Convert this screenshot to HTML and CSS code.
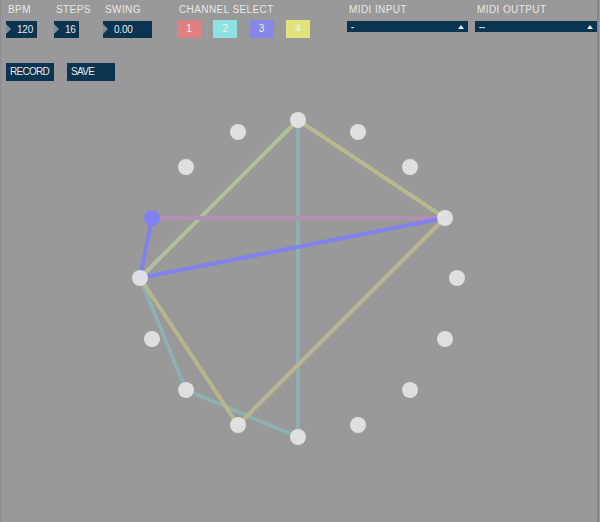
FILE: index.html
```html
<!DOCTYPE html>
<html>
<head>
<meta charset="utf-8">
<link rel="stylesheet" href="styles.css">
</head>
<body>
<div class="app">
  <svg class="canvas" width="600" height="522" viewBox="0 0 600 522">
    <g class="lines" stroke-width="4" stroke-linecap="round" fill="none">
      <line class="l-teal" x1="298" y1="120" x2="298" y2="437"/>
      <line class="l-teal" x1="298" y1="437" x2="186" y2="390"/>
      <line class="l-teal" x1="186" y1="390" x2="140" y2="278"/>
      <line class="l-khaki" x1="298" y1="120" x2="445" y2="218"/>
      <line class="l-khaki" x1="445" y1="218" x2="238" y2="425"/>
      <line class="l-khaki" x1="238" y1="425" x2="140" y2="278"/>
      <line class="l-green" x1="140" y1="278" x2="298" y2="120"/>
      <line class="l-pink" x1="152" y1="218" x2="445" y2="218"/>
      <line class="l-blue" x1="152" y1="218" x2="140" y2="278"/>
      <line class="l-blue" x1="140" y1="278" x2="445" y2="218"/>
    </g>
    <g class="dots">
      <circle cx="298" cy="120" r="8"/>
      <circle cx="358" cy="132" r="8"/>
      <circle cx="410" cy="167" r="8"/>
      <circle cx="445" cy="218" r="8"/>
      <circle cx="457" cy="278" r="8"/>
      <circle cx="445" cy="339" r="8"/>
      <circle cx="410" cy="390" r="8"/>
      <circle cx="358" cy="425" r="8"/>
      <circle cx="298" cy="437" r="8"/>
      <circle cx="238" cy="425" r="8"/>
      <circle cx="186" cy="390" r="8"/>
      <circle cx="152" cy="339" r="8"/>
      <circle cx="140" cy="278" r="8"/>
      <circle cx="186" cy="167" r="8"/>
      <circle cx="238" cy="132" r="8"/>
      <circle class="dot-active" cx="152" cy="218" r="8"/>
    </g>
  </svg>

  <div class="controls">
    <div class="row top">
      <div class="group g-bpm">
        <div class="label">BPM</div>
        <div class="numbox"><span class="arrow"></span>120</div>
      </div>
      <div class="group g-steps">
        <div class="label">STEPS</div>
        <div class="numbox"><span class="arrow"></span>16</div>
      </div>
      <div class="group g-swing">
        <div class="label">SWING</div>
        <div class="numbox"><span class="arrow"></span>0.00</div>
      </div>
      <div class="group g-channel">
        <div class="label">CHANNEL SELECT</div>
        <div class="channels">
          <div class="chan c1">1</div>
          <div class="chan c2">2</div>
          <div class="chan c3">3</div>
          <div class="chan c4">4</div>
        </div>
      </div>
      <div class="group g-midiin">
        <div class="label">MIDI INPUT</div>
        <div class="dropdown"><span class="dd-text">-</span><span class="caret"></span></div>
      </div>
      <div class="group g-midiout">
        <div class="label">MIDI OUTPUT</div>
        <div class="dropdown"><span class="dd-text">--</span><span class="caret"></span></div>
      </div>
    </div>
    <div class="row buttons">
      <div class="btn">RECORD</div>
      <div class="btn">SAVE</div>
    </div>
  </div>
</div>
</body>
</html>
```

FILE: styles.css
```css
html, body {
  margin: 0;
  padding: 0;
  background: #999999;
}
body {
  width: 600px;
  height: 522px;
  overflow: hidden;
}
.app {
  position: relative;
  width: 600px;
  height: 522px;
  background: #999999;
  box-sizing: border-box;
  border-left: 1px solid #8c8c8c;
  font-family: "Liberation Sans", Arial, sans-serif;
  font-size: 10px;
  color: #e8e8e8;
}
.app::after {
  content: "";
  position: absolute;
  top: 0;
  bottom: 0;
  left: 596px;
  width: 2px;
  background: #858585;
}
.canvas {
  position: absolute;
  left: -1px;
  top: 0;
}
.l-teal { stroke: #8fb0b0; }
.l-khaki { stroke: #b8b78e; }
.l-green { stroke: #b0c09e; }
.l-pink { stroke: #b38fb3; }
.l-blue { stroke: #8181ef; }
.dots circle {
  fill: #e5e5e5;
  fill-opacity: 0.92;
}
.dots circle.dot-active {
  fill: #8181ef;
  fill-opacity: 1;
}
.controls {
  position: relative;
  padding: 4px 0 0 5px;
}
.row {
  display: flex;
}
.group {
  flex: none;
}
.label {
  height: 12px;
  line-height: 12px;
  padding-left: 2px;
  letter-spacing: 0.4px;
  white-space: nowrap;
  margin-bottom: 5px;
}
.numbox {
  position: relative;
  height: 17px;
  line-height: 17px;
  background: #0b3450;
  box-sizing: border-box;
  padding-left: 11px;
  letter-spacing: -0.2px;
}
.arrow {
  position: absolute;
  left: 0;
  top: 3px;
  width: 0;
  height: 0;
  border-top: 5.5px solid transparent;
  border-bottom: 5.5px solid transparent;
  border-left: 5px solid #7e8c96;
}
.g-bpm { width: 31px; }
.g-steps { width: 25px; margin-left: 17px; }
.g-swing { width: 49px; margin-left: 24px; }
.g-channel { width: 134px; margin-left: 25px; }
.g-midiin { width: 121px; margin-left: 36px; }
.g-midiout { width: 122px; margin-left: 7px; }
.channels {
  display: flex;
  gap: 12.3px;
  margin-top: -1px;
}
.chan {
  width: 24px;
  height: 18px;
  line-height: 18px;
  text-align: center;
  color: #f0f0f0;
}
.c1 { background: #e08080; }
.c2 { background: #8fe2e2; }
.c3 { background: #8787e8; }
.c4 { background: #e2e27c; }
.dropdown {
  position: relative;
  height: 11px;
  line-height: 11px;
  background: #0b3450;
  box-sizing: border-box;
  padding-left: 4px;
}
.dd-text {
  font-size: 9px;
  font-weight: bold;
}
.caret {
  position: absolute;
  right: 4px;
  top: 4px;
  width: 0;
  height: 0;
  border-left: 3.5px solid transparent;
  border-right: 3.5px solid transparent;
  border-bottom: 4px solid #e8e8e8;
}
.buttons {
  margin-top: 25px;
  gap: 13px;
}
.btn {
  width: 48px;
  height: 18px;
  line-height: 18px;
  background: #0b3450;
  box-sizing: border-box;
  padding-left: 4px;
  letter-spacing: -0.7px;
}
```
